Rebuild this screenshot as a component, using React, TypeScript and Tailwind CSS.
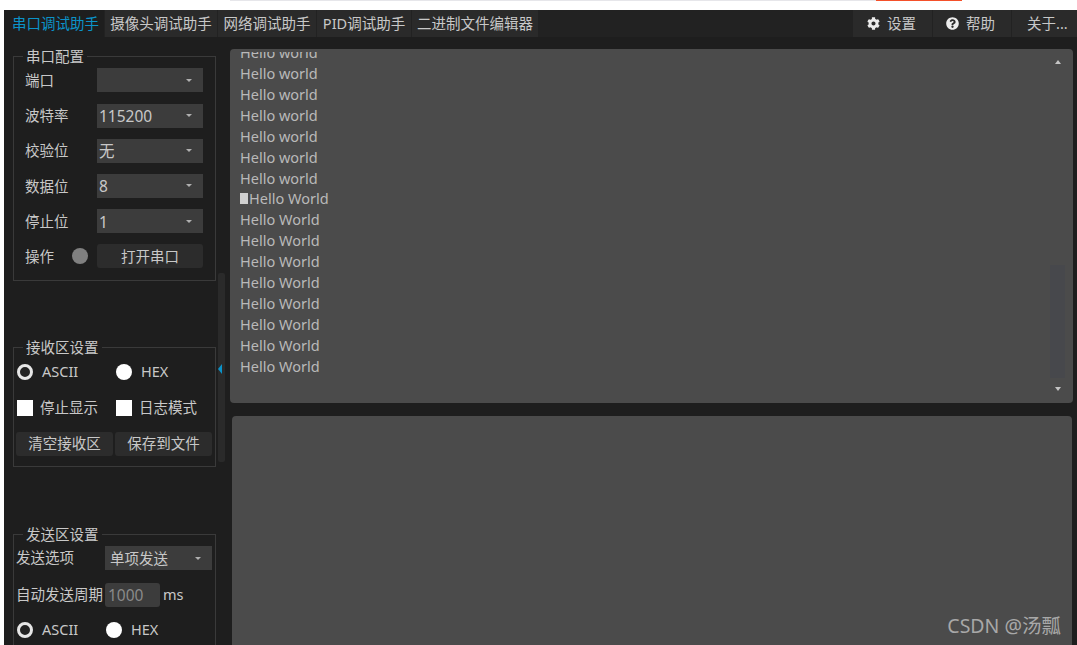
import { FaCog, FaQuestionCircle } from "react-icons/fa";

const font = "font-['Noto_Sans','Noto_Sans_CJK_SC',sans-serif]";

const tabs = ["摄像头调试助手", "网络调试助手", "PID调试助手", "二进制文件编辑器"];
const tabWidths = ["w-[112px]", "w-[98px]", "w-[94px]", "w-[126px]"];
const serialRows = [
  { label: "端口", value: "" },
  { label: "波特率", value: "115200" },
  { label: "校验位", value: "无" },
  { label: "数据位", value: "8" },
  { label: "停止位", value: "1" },
];
const lowerLines = Array(8).fill("Hello World");
const upperLines = Array(6).fill("Hello world");

function Caret() {
  return <span className="border-x-[3.5px] border-t-[3px] border-x-transparent border-t-[#b0b0b0]" />;
}

function Select({ value, className }: { value: string; className: string }) {
  return (
    <div className={`flex h-6 items-center justify-between bg-[#3c3c3c] pr-[11px] text-[#c8c8c8] ${className}`}>
      <span className="pt-[2px]">{value}</span>
      <Caret />
    </div>
  );
}

function Radio({ checked, label, className }: { checked?: boolean; label: string; className?: string }) {
  return (
    <div className={`flex items-center text-[14.5px] text-[#c8c8c8] ${className ?? ""}`}>
      {checked ? (
        <span className="h-4 w-4 rounded-full border-[3px] border-[#e6e6e6] bg-[#222]" />
      ) : (
        <span className="h-4 w-4 rounded-full bg-white" />
      )}
      <span className="ml-[9px]">{label}</span>
    </div>
  );
}

function Check({ label, className }: { label: string; className?: string }) {
  return (
    <div className={`flex items-center text-[14.5px] text-[#c8c8c8] ${className ?? ""}`}>
      <span className="h-4 w-4 bg-white" />
      <span className="ml-[7px]">{label}</span>
    </div>
  );
}

function Group({ title, className, children }: { title: string; className: string; children: React.ReactNode }) {
  return (
    <fieldset className={`ml-[9px] w-[203px] border border-[#3a3a3a] ${className}`}>
      <legend className="ml-[9px] px-[3px] text-[14.5px] leading-[16px] text-[#c8c8c8]">{title}</legend>
      {children}
    </fieldset>
  );
}

export default function App() {
  return (
    <div className={`h-[645px] w-[1077px] overflow-hidden bg-white ${font}`}>
      <div className="flex h-[10px] items-start pl-[230px]">
        <div className="h-px w-[646px] bg-[#e6e6ea]" />
        <div className="h-px w-[86px] bg-[#f4502a]" />
      </div>
      <div className="ml-[4px] flex h-[635px] flex-col bg-[#1e1e1e]">
        <div className="flex h-[27px] items-stretch bg-[#222222] text-[14.5px]">
          <div className="flex w-[100px] items-center whitespace-nowrap bg-[#1e1e1e] pl-[8px] text-[#0b93c9]">串口调试助手</div>
          {tabs.map((t, i) => (
            <div key={t} className={`ml-px flex items-center justify-center whitespace-nowrap bg-[#2a2a2a] text-[#c8c8c8] ${tabWidths[i]}`}>
              {t}
            </div>
          ))}
          <div className="flex-1" />
          <div className="flex w-[79px] items-center gap-[7px] bg-[#2a2a2a] pl-[14px] text-[#c8c8c8]">
            <FaCog size={13} color="#ececec" />
            设置
          </div>
          <div className="ml-px flex w-[78px] items-center gap-[7px] bg-[#2a2a2a] pl-[13px] text-[#c8c8c8]">
            <FaQuestionCircle size={13} color="#ececec" />
            帮助
          </div>
          <div className="ml-px w-[65px] whitespace-nowrap bg-[#2a2a2a] pl-[15px] leading-[27px] text-[#c8c8c8]">关于...</div>
        </div>

        <div className="flex min-h-0 flex-1 overflow-hidden">
          <div className="relative w-[226px] shrink-0 overflow-hidden pt-[11px]">
            <Group title="串口配置" className="h-[233px]">
              <div className="flex flex-col gap-[11.2px] pl-[11px] pt-[4.4px]">
                {serialRows.map((r) => (
                  <div key={r.label} className="flex h-6 items-center text-[14.5px] text-[#c8c8c8]">
                    <span className="w-[72px] pt-px">{r.label}</span>
                    <Select value={r.value} className="w-[106px] pl-[2px] text-[15.5px]" />
                  </div>
                ))}
                <div className="flex h-6 items-center text-[14.5px] text-[#c8c8c8]">
                  <span className="w-[47px] pt-px">操作</span>
                  <span className="h-4 w-4 rounded-full bg-[#808080]" />
                  <span className="ml-[9px] flex h-6 w-[106px] items-center justify-center rounded-[3px] bg-[#2c2c2c] pt-px">打开串口</span>
                </div>
              </div>
            </Group>

            <Group title="接收区设置" className="mt-[58px] h-[128px]">
              <div className="pl-[3px] pt-[5px]">
                <div className="flex h-6 items-center">
                  <Radio checked label="ASCII" className="w-[99px]" />
                  <Radio label="HEX" />
                </div>
                <div className="mt-3 flex h-6 items-center">
                  <Check label="停止显示" className="w-[99px]" />
                  <Check label="日志模式" />
                </div>
                <div className="-ml-px mt-3 flex gap-[2px] text-[14.5px] text-[#c8c8c8]">
                  <span className="flex h-6 w-[97px] items-center justify-center rounded-[3px] bg-[#2c2c2c]">清空接收区</span>
                  <span className="flex h-6 w-[97px] items-center justify-center rounded-[3px] bg-[#2c2c2c]">保存到文件</span>
                </div>
              </div>
            </Group>

            <Group title="发送区设置" className="mt-[59px] h-[140px]">
              <div className="pl-[2px] pt-[4px] text-[14.5px] text-[#c8c8c8]">
                <div className="flex h-6 items-center">
                  <span className="w-[89px]">发送选项</span>
                  <Select value="单项发送" className="w-[107px] pl-[5px]" />
                </div>
                <div className="mt-[13px] flex h-6 items-center">
                  <span className="w-[89px] whitespace-nowrap">自动发送周期</span>
                  <span className="flex h-6 w-[55px] items-center rounded-[3px] bg-[#3c3c3c] pl-[3px] pt-px text-[15.5px] text-[#8a8a8a]">1000</span>
                  <span className="ml-[3px]">ms</span>
                </div>
                <div className="ml-px mt-[11px] flex h-6 items-center">
                  <Radio checked label="ASCII" className="w-[89px]" />
                  <Radio label="HEX" />
                </div>
              </div>
            </Group>

            <div className="absolute left-[214px] top-[236px] h-[189px] w-[7px] rounded-[2px] bg-[#2a2a2a]" />
            <div className="absolute left-[214px] top-[327px] border-y-[5px] border-r-[4px] border-y-transparent border-r-[#0b93c9]" />
          </div>

          <div className="flex min-w-0 flex-1 flex-col pr-[4px] pt-[12px]">
            <div className="relative h-[354px] rounded-[4px] bg-[#4b4b4b] pl-[10px] pt-[3px] text-[14.5px] leading-[21px] text-[#b9b9b9]">
              <div className="h-[345px] overflow-hidden">
                <div className="-mt-[10px]">
                  <div>Hello world</div>
                  {upperLines.map((l, i) => (
                    <div key={i}>{l}</div>
                  ))}
                  <div className="-mt-px flex items-center">
                    <span className="h-[11px] w-[8px] bg-[#d0d0d0]" />
                    <span className="ml-px">Hello World</span>
                  </div>
                  {lowerLines.map((l, i) => (
                    <div key={i}>{l}</div>
                  ))}
                </div>
              </div>
              <div className="absolute right-[12px] top-[11px] border-x-[3px] border-b-[4px] border-x-transparent border-b-[#c4c4c4]" />
              <div className="absolute right-[8px] top-[216px] h-[113px] w-[15px] bg-[#47484c]" />
              <div className="absolute bottom-[12px] right-[12px] border-x-[3px] border-t-[4px] border-x-transparent border-t-[#c4c4c4]" />
            </div>
            <div className="relative ml-[2px] mr-px mt-[13px] flex-1 rounded-t-[4px] bg-[#4b4b4b]">
              <span className="absolute bottom-[7px] right-[11px] whitespace-nowrap text-[19.5px] leading-[24px] text-[#a8a8a8]">CSDN @汤瓢</span>
            </div>
          </div>
        </div>
      </div>
    </div>
  );
}
